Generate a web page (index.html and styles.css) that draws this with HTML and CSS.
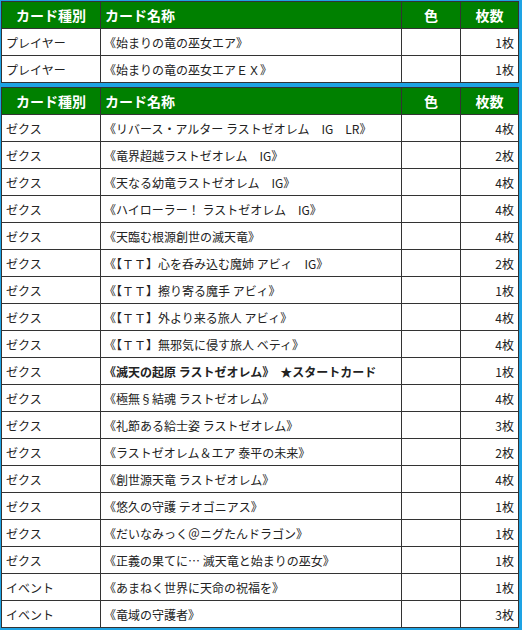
FILE: index.html
```html
<!DOCTYPE html>
<html lang="ja">
<head>
<meta charset="utf-8">
<title>デッキリスト</title>
<link rel="stylesheet" href="styles.css">
</head>
<body>
<table class="deck">
  <colgroup><col class="c-type"><col class="c-name"><col class="c-color"><col class="c-num"></colgroup>
  <thead>
    <tr><th class="center">カード種別</th><th class="left">カード名称</th><th class="center">色</th><th class="center">枚数</th></tr>
  </thead>
  <tbody>
    <tr><td>プレイヤー</td><td class="name">《始まりの竜の巫女エア》</td><td></td><td class="num">1枚</td></tr>
    <tr><td>プレイヤー</td><td class="name">《始まりの竜の巫女エアＥＸ》</td><td></td><td class="num">1枚</td></tr>
  </tbody>
</table>
<table class="deck">
  <colgroup><col class="c-type"><col class="c-name"><col class="c-color"><col class="c-num"></colgroup>
  <thead>
    <tr><th class="center">カード種別</th><th class="left">カード名称</th><th class="center">色</th><th class="center">枚数</th></tr>
  </thead>
  <tbody>
    <tr><td>ゼクス</td><td class="name">《リバース・アルター ラストゼオレム　IG　LR》</td><td></td><td class="num">4枚</td></tr>
    <tr><td>ゼクス</td><td class="name">《竜界超越ラストゼオレム　IG》</td><td></td><td class="num">2枚</td></tr>
    <tr><td>ゼクス</td><td class="name">《天なる幼竜ラストゼオレム　IG》</td><td></td><td class="num">4枚</td></tr>
    <tr><td>ゼクス</td><td class="name">《ハイローラー！ ラストゼオレム　IG》</td><td></td><td class="num">4枚</td></tr>
    <tr><td>ゼクス</td><td class="name">《天臨む根源創世の滅天竜》</td><td></td><td class="num">4枚</td></tr>
    <tr><td>ゼクス</td><td class="name">《【ＴＴ】心を呑み込む魔姉 アビィ　IG》</td><td></td><td class="num">2枚</td></tr>
    <tr><td>ゼクス</td><td class="name">《【ＴＴ】擦り寄る魔手 アビィ》</td><td></td><td class="num">1枚</td></tr>
    <tr><td>ゼクス</td><td class="name">《【ＴＴ】外より来る旅人 アビィ》</td><td></td><td class="num">4枚</td></tr>
    <tr><td>ゼクス</td><td class="name">《【ＴＴ】無邪気に侵す旅人 ベティ》</td><td></td><td class="num">4枚</td></tr>
    <tr><td>ゼクス</td><td class="name strong">《滅天の起原 ラストゼオレム》　★スタートカード</td><td></td><td class="num">1枚</td></tr>
    <tr><td>ゼクス</td><td class="name">《極無§結魂 ラストゼオレム》</td><td></td><td class="num">4枚</td></tr>
    <tr><td>ゼクス</td><td class="name">《礼節ある給士姿 ラストゼオレム》</td><td></td><td class="num">3枚</td></tr>
    <tr><td>ゼクス</td><td class="name">《ラストゼオレム＆エア 泰平の未来》</td><td></td><td class="num">2枚</td></tr>
    <tr><td>ゼクス</td><td class="name">《創世源天竜 ラストゼオレム》</td><td></td><td class="num">4枚</td></tr>
    <tr><td>ゼクス</td><td class="name">《悠久の守護 テオゴニアス》</td><td></td><td class="num">1枚</td></tr>
    <tr><td>ゼクス</td><td class="name">《だいなみっく＠ニグたんドラゴン》</td><td></td><td class="num">1枚</td></tr>
    <tr><td>ゼクス</td><td class="name">《正義の果てに… 滅天竜と始まりの巫女》</td><td></td><td class="num">1枚</td></tr>
    <tr><td>イベント</td><td class="name">《あまねく世界に天命の祝福を》</td><td></td><td class="num">1枚</td></tr>
    <tr><td>イベント</td><td class="name">《竜域の守護者》</td><td></td><td class="num">3枚</td></tr>
  </tbody>
</table>
</body>
</html>
```
FILE: styles.css
```css
html, body {
  margin: 0;
  padding: 0;
}
body {
  background: #1ea3e4;
  padding: 1px;
  font-family: "Noto Sans CJK JP", "Noto Sans", sans-serif;
  color: #222;
}
.deck {
  table-layout: fixed;
  border-collapse: separate;
  border-spacing: 0;
  width: 518px;
  border-left: 1px solid #333;
  border-top: 1px solid #333;
  background: #fff;
  margin: 0 0 4px 0;
}
.c-type { width: 99px; }
.c-name { width: 301px; }
.c-color { width: 59px; }
.c-num { width: 58px; }
.deck th, .deck td {
  box-sizing: border-box;
  height: 27px;
  border-right: 1px solid #333;
  border-bottom: 1px solid #333;
  padding: 0 4px;
  white-space: nowrap;
  overflow: hidden;
  vertical-align: middle;
}
.deck th {
  background: #008000;
  color: #fff;
  font-size: 14px;
  font-weight: bold;
}
.deck th.center { text-align: center; }
.deck th.left { text-align: left; }
.deck td {
  font-size: 12px;
  text-align: left;
}
.deck td.name { padding-left: 3px; }
.deck td.num { text-align: right; }
.deck td.strong { font-weight: bold; }
```
